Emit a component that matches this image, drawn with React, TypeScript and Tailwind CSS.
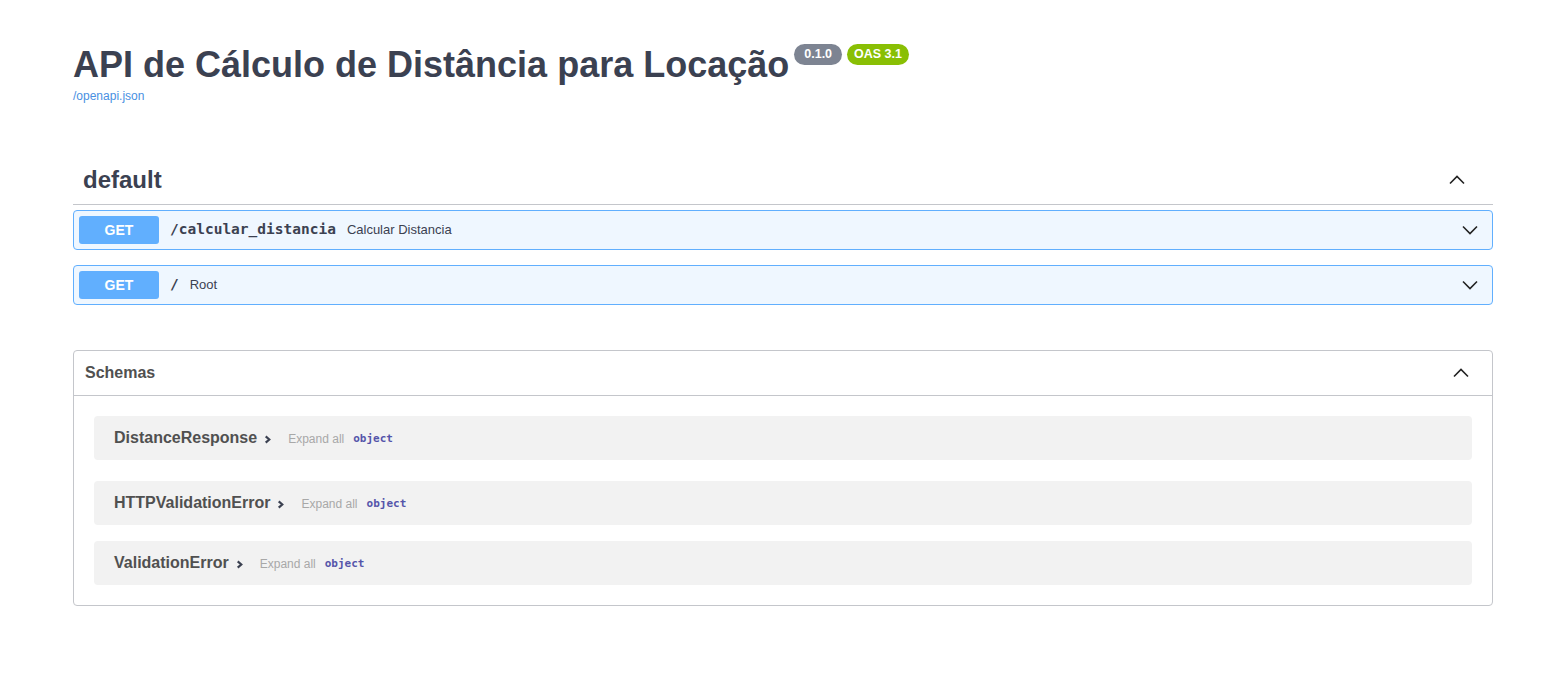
import React from 'react';

const sans = "font-['Liberation_Sans',Arial,sans-serif]";
const mono = "font-['DejaVu_Sans_Mono',monospace]";

const Chevron = ({ up, className }: { up?: boolean; className?: string }) => (
    <svg viewBox="0 0 20 20" className={className} fill="none" stroke="currentColor" strokeWidth={1.6}>
        {up ? <polyline points="3,13.5 10,6.5 17,13.5" /> : <polyline points="3,6.5 10,13.5 17,6.5" />}
    </svg>
);

const SmallArrow = () => (
    <svg viewBox="0 0 10 10" className="h-[9px] w-[9px] text-[#3b4151]" fill="none" stroke="currentColor" strokeWidth={2.4}>
        <polyline points="3,1.5 7,5 3,8.5" />
    </svg>
);

const Operation = ({ path, summary }: { path: string; summary: string }) => (
    <div className="mb-[15px] flex h-[40px] items-center rounded-[4px] border border-[#61affe] bg-[#eff7ff] pl-[5px] pr-[12px]">
        <span className={`${sans} flex h-[28px] w-[80px] items-center justify-center rounded-[3px] bg-[#61affe] text-[14px] font-bold text-white`}>
            GET
        </span>
        <span className={`${mono} ml-[11px] text-[14.5px] font-bold text-[#3b4151]`}>{path}</span>
        <span className={`${sans} ml-[11px] text-[13px] text-[#3b4151]`}>{summary}</span>
        <Chevron className="ml-auto h-[20px] w-[20px] text-[#222]" />
    </div>
);

const Model = ({ name, className }: { name: string; className: string }) => (
    <div className={`mx-[20px] flex h-[44px] items-center rounded-[4px] bg-[#f2f2f2] pl-[20px] ${className}`}>
        <span className={`${sans} text-[16px] font-bold text-[#505050]`}>{name}</span>
        <span className="ml-[6px] mt-[3px]">
            <SmallArrow />
        </span>
        <span className={`${sans} ml-[16px] mt-[2px] text-[12px] text-[#a8a8a8]`}>Expand all</span>
        <span className={`${mono} ml-[9px] mt-[3px] text-[11px] font-semibold text-[#55a]`}>object</span>
    </div>
);

export default function App() {
    return (
        <div className={`${sans} min-h-[692px] bg-white text-[#3b4151]`}>
            <div className="ml-[73px] w-[1420px] pt-[44px]">
                {/* info */}
                <div className="flex items-start">
                    <h2 className="text-[36px] font-bold leading-[41px] text-[#3b4151]">
                        API de Cálculo de Distância para Locação
                    </h2>
                    <span className="ml-[5px] flex h-[21px] items-center rounded-full bg-[#7d8492] px-[10px] text-[12.5px] font-bold text-white">
                        0.1.0
                    </span>
                    <span className="ml-[5px] flex h-[21px] items-center rounded-full bg-[#89bf04] px-[7px] text-[12.5px] font-bold text-white">
                        OAS 3.1
                    </span>
                </div>
                <a className="mt-[3px] block text-[12px] leading-[16px] text-[#4990e2]">/openapi.json</a>

                {/* default tag */}
                <div className="mt-[52px] flex h-[49px] items-center border-b border-[#c4c6cb] pl-[10px] pr-[26px]">
                    <h3 className="text-[24px] font-bold text-[#3b4151]">default</h3>
                    <Chevron up className="ml-auto h-[20px] w-[20px] text-[#222]" />
                </div>
                <div className="mt-[5px]">
                    <Operation path="/calcular_distancia" summary="Calcular Distancia" />
                    <Operation path="/" summary="Root" />
                </div>

                {/* schemas */}
                <section className="mt-[45px] rounded-[4px] border border-[#c4c6cb]">
                    <div className="flex h-[45px] items-center border-b border-[#c4c6cb] pl-[11px] pr-[21px]">
                        <h4 className="text-[16px] font-bold text-[#505050]">Schemas</h4>
                        <Chevron up className="ml-auto h-[20px] w-[20px] text-[#222]" />
                    </div>
                    <div className="pb-[20px]">
                        <Model name="DistanceResponse" className="mt-[20px]" />
                        <Model name="HTTPValidationError" className="mt-[21px]" />
                        <Model name="ValidationError" className="mt-[16px]" />
                    </div>
                </section>
            </div>
        </div>
    );
}
